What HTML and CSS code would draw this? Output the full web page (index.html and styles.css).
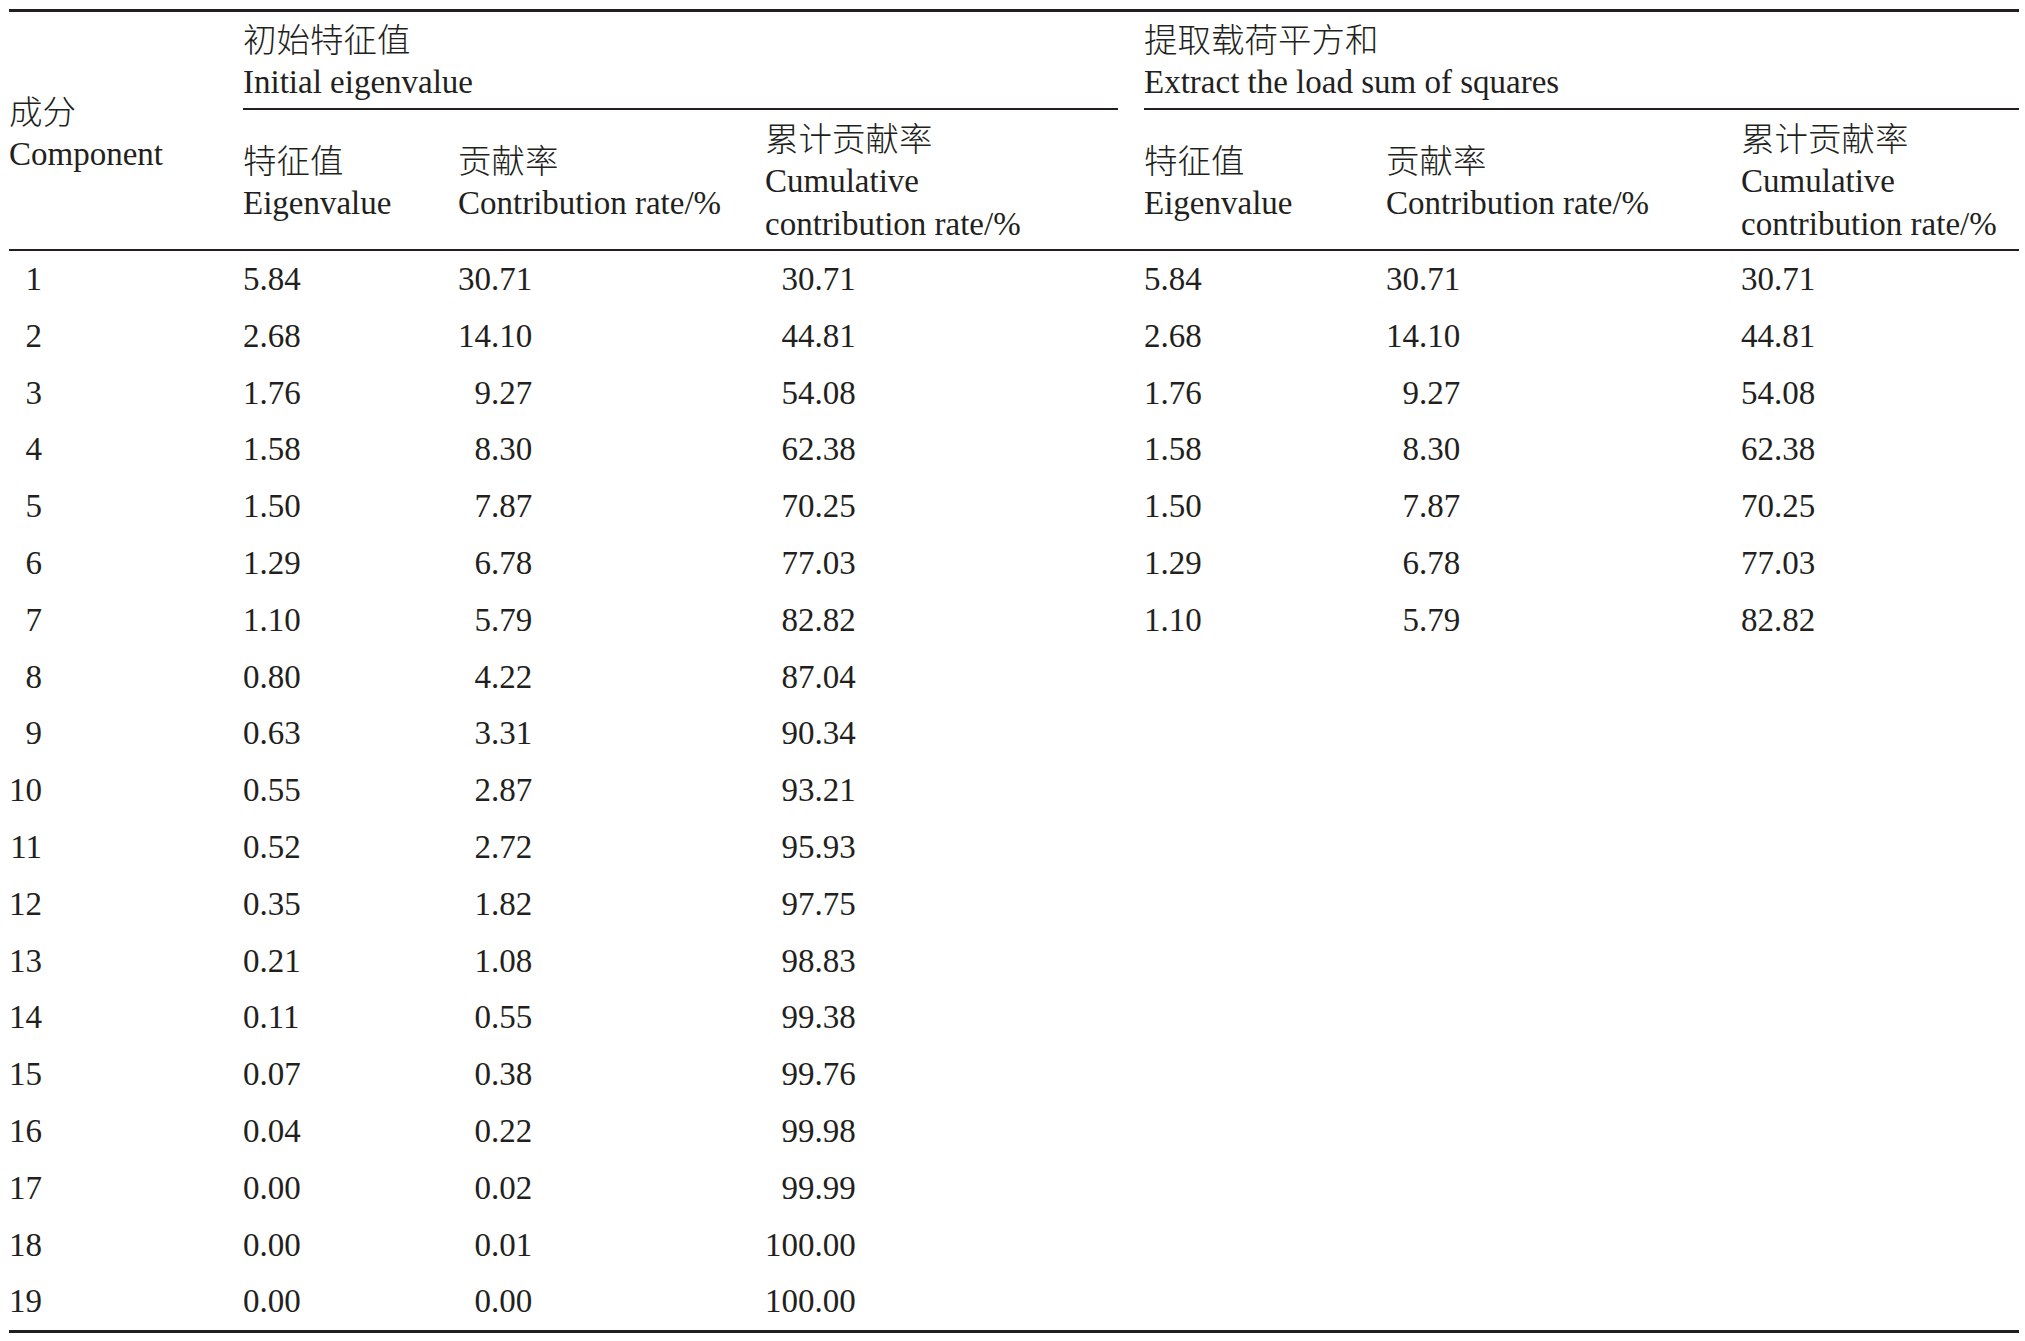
FILE: index.html
```html
<!DOCTYPE html>
<html lang="zh-CN">
<head>
<meta charset="utf-8">
<title>特征值与贡献率</title>
<link rel="stylesheet" href="styles.css">
</head>
<body>
<table class="tbl">
  <colgroup>
    <col class="c-comp">
    <col class="c-eig">
    <col class="c-con">
    <col class="c-cum">
    <col class="c-gap">
    <col class="c-eig2">
    <col class="c-con2">
    <col class="c-cum2">
  </colgroup>
  <thead>
    <tr class="hr1">
      <th rowspan="2" class="comp-h"><div class="ln zh">成分</div><div class="ln">Component</div></th>
      <th colspan="3" class="grp"><div class="ln zh">初始特征值</div><div class="ln">Initial eigenvalue</div></th>
      <th rowspan="2" class="gap-h"></th>
      <th colspan="3" class="grp"><div class="ln zh">提取载荷平方和</div><div class="ln">Extract the load sum of squares</div></th>
    </tr>
    <tr class="hr2">
      <th><div class="ln zh">特征值</div><div class="ln">Eigenvalue</div></th>
      <th><div class="ln zh">贡献率</div><div class="ln">Contribution rate/%</div></th>
      <th><div class="ln zh">累计贡献率</div><div class="ln">Cumulative</div><div class="ln">contribution rate/%</div></th>
      <th><div class="ln zh">特征值</div><div class="ln">Eigenvalue</div></th>
      <th><div class="ln zh">贡献率</div><div class="ln">Contribution rate/%</div></th>
      <th><div class="ln zh">累计贡献率</div><div class="ln">Cumulative</div><div class="ln">contribution rate/%</div></th>
    </tr>
  </thead>
  <tbody>
    <tr><td><span class="n1">1</span></td><td>5.84</td><td><span class="n2">30.71</span></td><td><span class="n3">30.71</span></td><td></td><td>5.84</td><td><span class="n2">30.71</span></td><td>30.71</td></tr>
    <tr><td><span class="n1">2</span></td><td>2.68</td><td><span class="n2">14.10</span></td><td><span class="n3">44.81</span></td><td></td><td>2.68</td><td><span class="n2">14.10</span></td><td>44.81</td></tr>
    <tr><td><span class="n1">3</span></td><td>1.76</td><td><span class="n2">9.27</span></td><td><span class="n3">54.08</span></td><td></td><td>1.76</td><td><span class="n2">9.27</span></td><td>54.08</td></tr>
    <tr><td><span class="n1">4</span></td><td>1.58</td><td><span class="n2">8.30</span></td><td><span class="n3">62.38</span></td><td></td><td>1.58</td><td><span class="n2">8.30</span></td><td>62.38</td></tr>
    <tr><td><span class="n1">5</span></td><td>1.50</td><td><span class="n2">7.87</span></td><td><span class="n3">70.25</span></td><td></td><td>1.50</td><td><span class="n2">7.87</span></td><td>70.25</td></tr>
    <tr><td><span class="n1">6</span></td><td>1.29</td><td><span class="n2">6.78</span></td><td><span class="n3">77.03</span></td><td></td><td>1.29</td><td><span class="n2">6.78</span></td><td>77.03</td></tr>
    <tr><td><span class="n1">7</span></td><td>1.10</td><td><span class="n2">5.79</span></td><td><span class="n3">82.82</span></td><td></td><td>1.10</td><td><span class="n2">5.79</span></td><td>82.82</td></tr>
    <tr><td><span class="n1">8</span></td><td>0.80</td><td><span class="n2">4.22</span></td><td><span class="n3">87.04</span></td><td></td><td></td><td></td><td></td></tr>
    <tr><td><span class="n1">9</span></td><td>0.63</td><td><span class="n2">3.31</span></td><td><span class="n3">90.34</span></td><td></td><td></td><td></td><td></td></tr>
    <tr><td><span class="n1">10</span></td><td>0.55</td><td><span class="n2">2.87</span></td><td><span class="n3">93.21</span></td><td></td><td></td><td></td><td></td></tr>
    <tr><td><span class="n1">11</span></td><td>0.52</td><td><span class="n2">2.72</span></td><td><span class="n3">95.93</span></td><td></td><td></td><td></td><td></td></tr>
    <tr><td><span class="n1">12</span></td><td>0.35</td><td><span class="n2">1.82</span></td><td><span class="n3">97.75</span></td><td></td><td></td><td></td><td></td></tr>
    <tr><td><span class="n1">13</span></td><td>0.21</td><td><span class="n2">1.08</span></td><td><span class="n3">98.83</span></td><td></td><td></td><td></td><td></td></tr>
    <tr><td><span class="n1">14</span></td><td>0.11</td><td><span class="n2">0.55</span></td><td><span class="n3">99.38</span></td><td></td><td></td><td></td><td></td></tr>
    <tr><td><span class="n1">15</span></td><td>0.07</td><td><span class="n2">0.38</span></td><td><span class="n3">99.76</span></td><td></td><td></td><td></td><td></td></tr>
    <tr><td><span class="n1">16</span></td><td>0.04</td><td><span class="n2">0.22</span></td><td><span class="n3">99.98</span></td><td></td><td></td><td></td><td></td></tr>
    <tr><td><span class="n1">17</span></td><td>0.00</td><td><span class="n2">0.02</span></td><td><span class="n3">99.99</span></td><td></td><td></td><td></td><td></td></tr>
    <tr><td><span class="n1">18</span></td><td>0.00</td><td><span class="n2">0.01</span></td><td><span class="n3">100.00</span></td><td></td><td></td><td></td><td></td></tr>
    <tr><td><span class="n1">19</span></td><td>0.00</td><td><span class="n2">0.00</span></td><td><span class="n3">100.00</span></td><td></td><td></td><td></td><td></td></tr>
  </tbody>
</table>
</body>
</html>
```

FILE: styles.css
```css
html, body {
  margin: 0;
  padding: 0;
  background: #ffffff;
}

body {
  color: #231f20;
  font-family: "Liberation Serif", "Noto Sans CJK SC", serif;
  font-size: 33px;
}

.tbl {
  margin: 9px 0 0 9px;
  width: 2010px;
  table-layout: fixed;
  border-collapse: separate;
  border-spacing: 0;
}

.c-comp { width: 234px; }
.c-eig  { width: 215px; }
.c-con  { width: 307px; }
.c-cum  { width: 353px; }
.c-gap  { width: 26px; }
.c-eig2 { width: 242px; }
.c-con2 { width: 355px; }
.c-cum2 { width: 278px; }

.tbl th,
.tbl td {
  padding: 0;
  text-align: left;
  font-weight: normal;
  white-space: nowrap;
  vertical-align: middle;
}

.ln {
  height: 43px;
  line-height: 46px;
  overflow: visible;
}

.zh {
  font-family: "Noto Sans CJK SC", sans-serif;
  font-size: 33.5px;
  font-weight: 300;
  line-height: 43px;
}

.hr1 th {
  border-top: 3px solid #231f20;
  padding: 4px 0 6px;
}

.hr1 .grp {
  border-bottom: 2px solid #231f20;
}

.hr1 .comp-h,
.hr1 .gap-h {
  border-bottom: 2px solid #231f20;
  padding: 0;
}

.hr2 th {
  padding: 5px 0 5px;
  border-bottom: 2px solid #231f20;
}

.tbl td {
  height: 56.8px;
  line-height: 56.8px;
}

.tbl tbody tr:last-child td {
  border-bottom: 3px solid #231f20;
}

.n1,
.n2,
.n3 {
  display: inline-block;
  text-align: right;
}

.n1 { width: 1em; }
.n2 { width: 2.25em; }
.n3 { width: 2.75em; }
```
